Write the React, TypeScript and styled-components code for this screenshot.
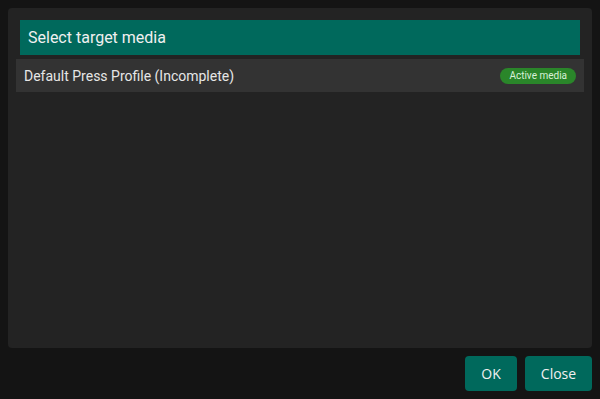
import React from "react";
import styled, { createGlobalStyle } from "styled-components";

const GlobalStyle = createGlobalStyle`
  html, body {
    margin: 0;
    padding: 0;
    background: #141414;
    font-family: Roboto, "Noto Sans", sans-serif;
  }
`;

const Dialog = styled.div`
  width: 600px;
  height: 399px;
  box-sizing: border-box;
  padding: 8px;
  display: flex;
  flex-direction: column;
`;

const Panel = styled.section`
  height: 341px;
  box-sizing: border-box;
  background: #232323;
  border-radius: 4px;
  padding: 12px 8px;
  display: flex;
  flex-direction: column;
  gap: 4px;
`;

const Header = styled.h2`
  margin: 0 4px;
  height: 35px;
  box-sizing: border-box;
  background: #00695c;
  color: #f0f0f0;
  font-size: 16px;
  font-weight: 400;
  padding: 0 8px;
  display: flex;
  align-items: center;
`;

const Row = styled.div`
  height: 33px;
  background: #333333;
  display: flex;
  align-items: center;
  justify-content: space-between;
  padding: 0 8px;
  color: #e6e6e6;
  font-size: 14px;
`;

const Badge = styled.span`
  background: #2a862a;
  color: #d8f0d8;
  font-size: 10px;
  border-radius: 8px;
  height: 16px;
  padding: 0 9px;
  display: flex;
  align-items: center;
`;

const Footer = styled.div`
  margin-top: 8px;
  display: flex;
  justify-content: flex-end;
  gap: 8px;
`;

const Button = styled.button<{ $w: number }>`
  width: ${(p) => p.$w}px;
  height: 35px;
  border: none;
  border-radius: 4px;
  background: #00695c;
  color: #f0f0f0;
  font-family: "Open Sans", Roboto, sans-serif;
  font-size: 14px;
  cursor: pointer;
`;

export default function App() {
  return (
    <>
      <GlobalStyle />
      <Dialog>
        <Panel>
          <Header>Select target media</Header>
          <Row>
            <span>Default Press Profile (Incomplete)</span>
            <Badge>Active media</Badge>
          </Row>
        </Panel>
        <Footer>
          <Button $w={52}>OK</Button>
          <Button $w={67}>Close</Button>
        </Footer>
      </Dialog>
    </>
  );
}
